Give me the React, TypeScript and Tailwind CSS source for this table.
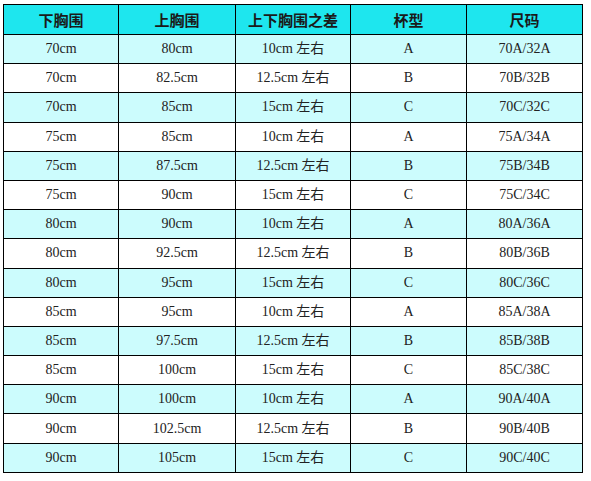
import React from "react";

const rows: string[][] = [
  ["70cm", "80cm", "10cm 左右", "A", "70A/32A"],
  ["70cm", "82.5cm", "12.5cm 左右", "B", "70B/32B"],
  ["70cm", "85cm", "15cm 左右", "C", "70C/32C"],
  ["75cm", "85cm", "10cm 左右", "A", "75A/34A"],
  ["75cm", "87.5cm", "12.5cm 左右", "B", "75B/34B"],
  ["75cm", "90cm", "15cm 左右", "C", "75C/34C"],
  ["80cm", "90cm", "10cm 左右", "A", "80A/36A"],
  ["80cm", "92.5cm", "12.5cm 左右", "B", "80B/36B"],
  ["80cm", "95cm", "15cm 左右", "C", "80C/36C"],
  ["85cm", "95cm", "10cm 左右", "A", "85A/38A"],
  ["85cm", "97.5cm", "12.5cm 左右", "B", "85B/38B"],
  ["85cm", "100cm", "15cm 左右", "C", "85C/38C"],
  ["90cm", "100cm", "10cm 左右", "A", "90A/40A"],
  ["90cm", "102.5cm", "12.5cm 左右", "B", "90B/40B"],
  ["90cm", "105cm", "15cm 左右", "C", "90C/40C"],
];

const headers = ["下胸围", "上胸围", "上下胸围之差", "杯型", "尺码"];

export default function App() {
  return (
    <div className="w-[591px] h-[481px] bg-white pt-[4px] pl-[3px]">
      <table className="border-collapse w-[579px] table-fixed">
        <colgroup>
          <col className="w-[115px]" />
          <col className="w-[117px]" />
          <col className="w-[115px]" />
          <col className="w-[116px]" />
          <col className="w-[116px]" />
        </colgroup>
        <thead>
          <tr className="h-[30px] bg-[#1ee6ee]">
            {headers.map((h) => (
              <th
                key={h}
                className="border border-black p-0 text-center align-middle text-[15px] font-bold text-[#1a1a1a] [font-family:'Noto_Sans_CJK_SC',sans-serif] leading-none"
              >
                {h}
              </th>
            ))}
          </tr>
        </thead>
        <tbody>
          {rows.map((r, i) => (
            <tr
              key={i}
              className={
                i % 2 === 0 ? "h-[29.2px] bg-[#ccfcfd]" : "h-[29.2px] bg-white"
              }
            >
              {r.map((c, j) => (
                <td
                  key={j}
                  className="border border-black p-0 text-center align-middle text-[14px] text-[#222] [font-family:'Liberation_Serif','Noto_Sans_CJK_SC',serif] leading-none"
                >
                  {c}
                </td>
              ))}
            </tr>
          ))}
        </tbody>
      </table>
    </div>
  );
}
